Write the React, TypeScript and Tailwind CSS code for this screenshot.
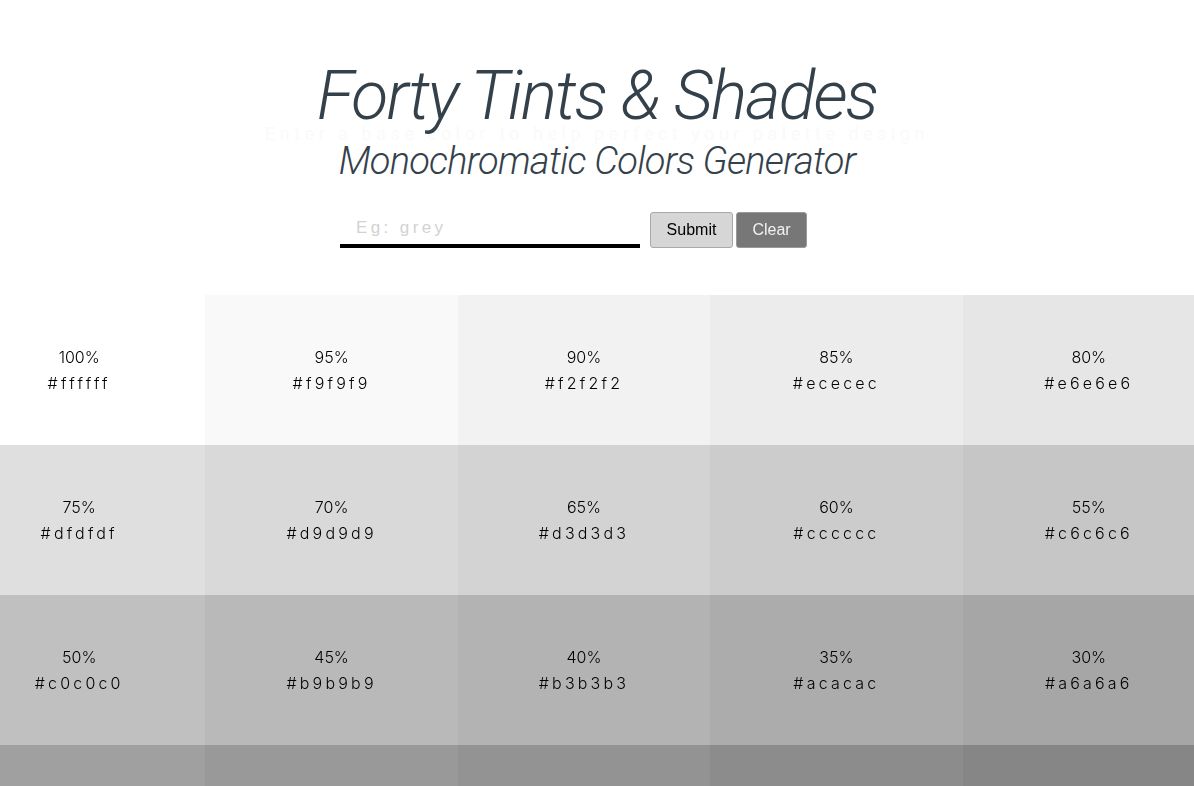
const swatches = [
  ['100%', 'ffffff'], ['95%', 'f9f9f9'], ['90%', 'f2f2f2'], ['85%', 'ececec'], ['80%', 'e6e6e6'],
  ['75%', 'dfdfdf'], ['70%', 'd9d9d9'], ['65%', 'd3d3d3'], ['60%', 'cccccc'], ['55%', 'c6c6c6'],
  ['50%', 'c0c0c0'], ['45%', 'b9b9b9'], ['40%', 'b3b3b3'], ['35%', 'acacac'], ['30%', 'a6a6a6'],
  ['25%', 'a0a0a0'], ['20%', '999999'], ['15%', '939393'], ['10%', '8c8c8c'], ['5%', '868686'],
];

const Swatch = ({ pct, hex }: { pct: string; hex: string }) => (
  <div
    className="h-[150px] flex flex-col items-center justify-center text-[16px] leading-[26px] text-black font-light"
    style={{ backgroundColor: `#${hex}` }}
  >
    <span>{pct}</span>
    <span className="tracking-[0.2em]">#{hex}</span>
  </div>
);

export default function App() {
  return (
    <div className="w-full h-screen overflow-hidden bg-white font-['Inter',sans-serif]">
      {/* Header */}
      <header className="relative flex flex-col items-center text-[#34414b] font-['Roboto',sans-serif]">
        <p className="absolute top-[120px] left-0 right-0 text-center text-[18px] tracking-[0.25em] text-[#fafafa]">
          Enter a base color to help perfect your palette design
        </p>
        <h1 className="relative pt-[62px] text-[68px] leading-none font-light italic tracking-[-0.028em]">
          Forty Tints &amp; Shades
        </h1>
        <h2 className="relative mt-[12px] text-[38px] leading-none font-light italic tracking-[-0.02em]">
          Monochromatic Colors Generator
        </h2>
      </header>

      {/* Form */}
      <form className="mt-[32px] flex items-start justify-center pr-[47px]" onSubmit={(e) => e.preventDefault()}>
        <input
          type="text"
          autoFocus
          placeholder="Eg: grey"
          className="w-[300px] h-[36px] px-[16px] border-b-4 border-black text-[17px] tracking-[0.2em] outline-none placeholder:text-[#d2d2d2] font-['Liberation_Sans',sans-serif]"
        />
        <button className="ml-[10px] w-[83px] h-[36px] bg-[#d6d6d6] border border-[#a9a9a9] rounded-[3px] text-[16px] text-black font-['Liberation_Sans',sans-serif]">
          Submit
        </button>
        <button className="ml-[3px] w-[71px] h-[36px] bg-[#777777] border border-[#999999] rounded-[3px] text-[16px] text-[#f2f2f2] font-['Liberation_Sans',sans-serif]">
          Clear
        </button>
      </form>

      {/* Swatch grid */}
      <section className="mt-[47px] -ml-[47px] w-[1262px] grid grid-cols-5">
        {swatches.map(([pct, hex]) => (
          <Swatch key={hex} pct={pct} hex={hex} />
        ))}
      </section>
    </div>
  );
}
